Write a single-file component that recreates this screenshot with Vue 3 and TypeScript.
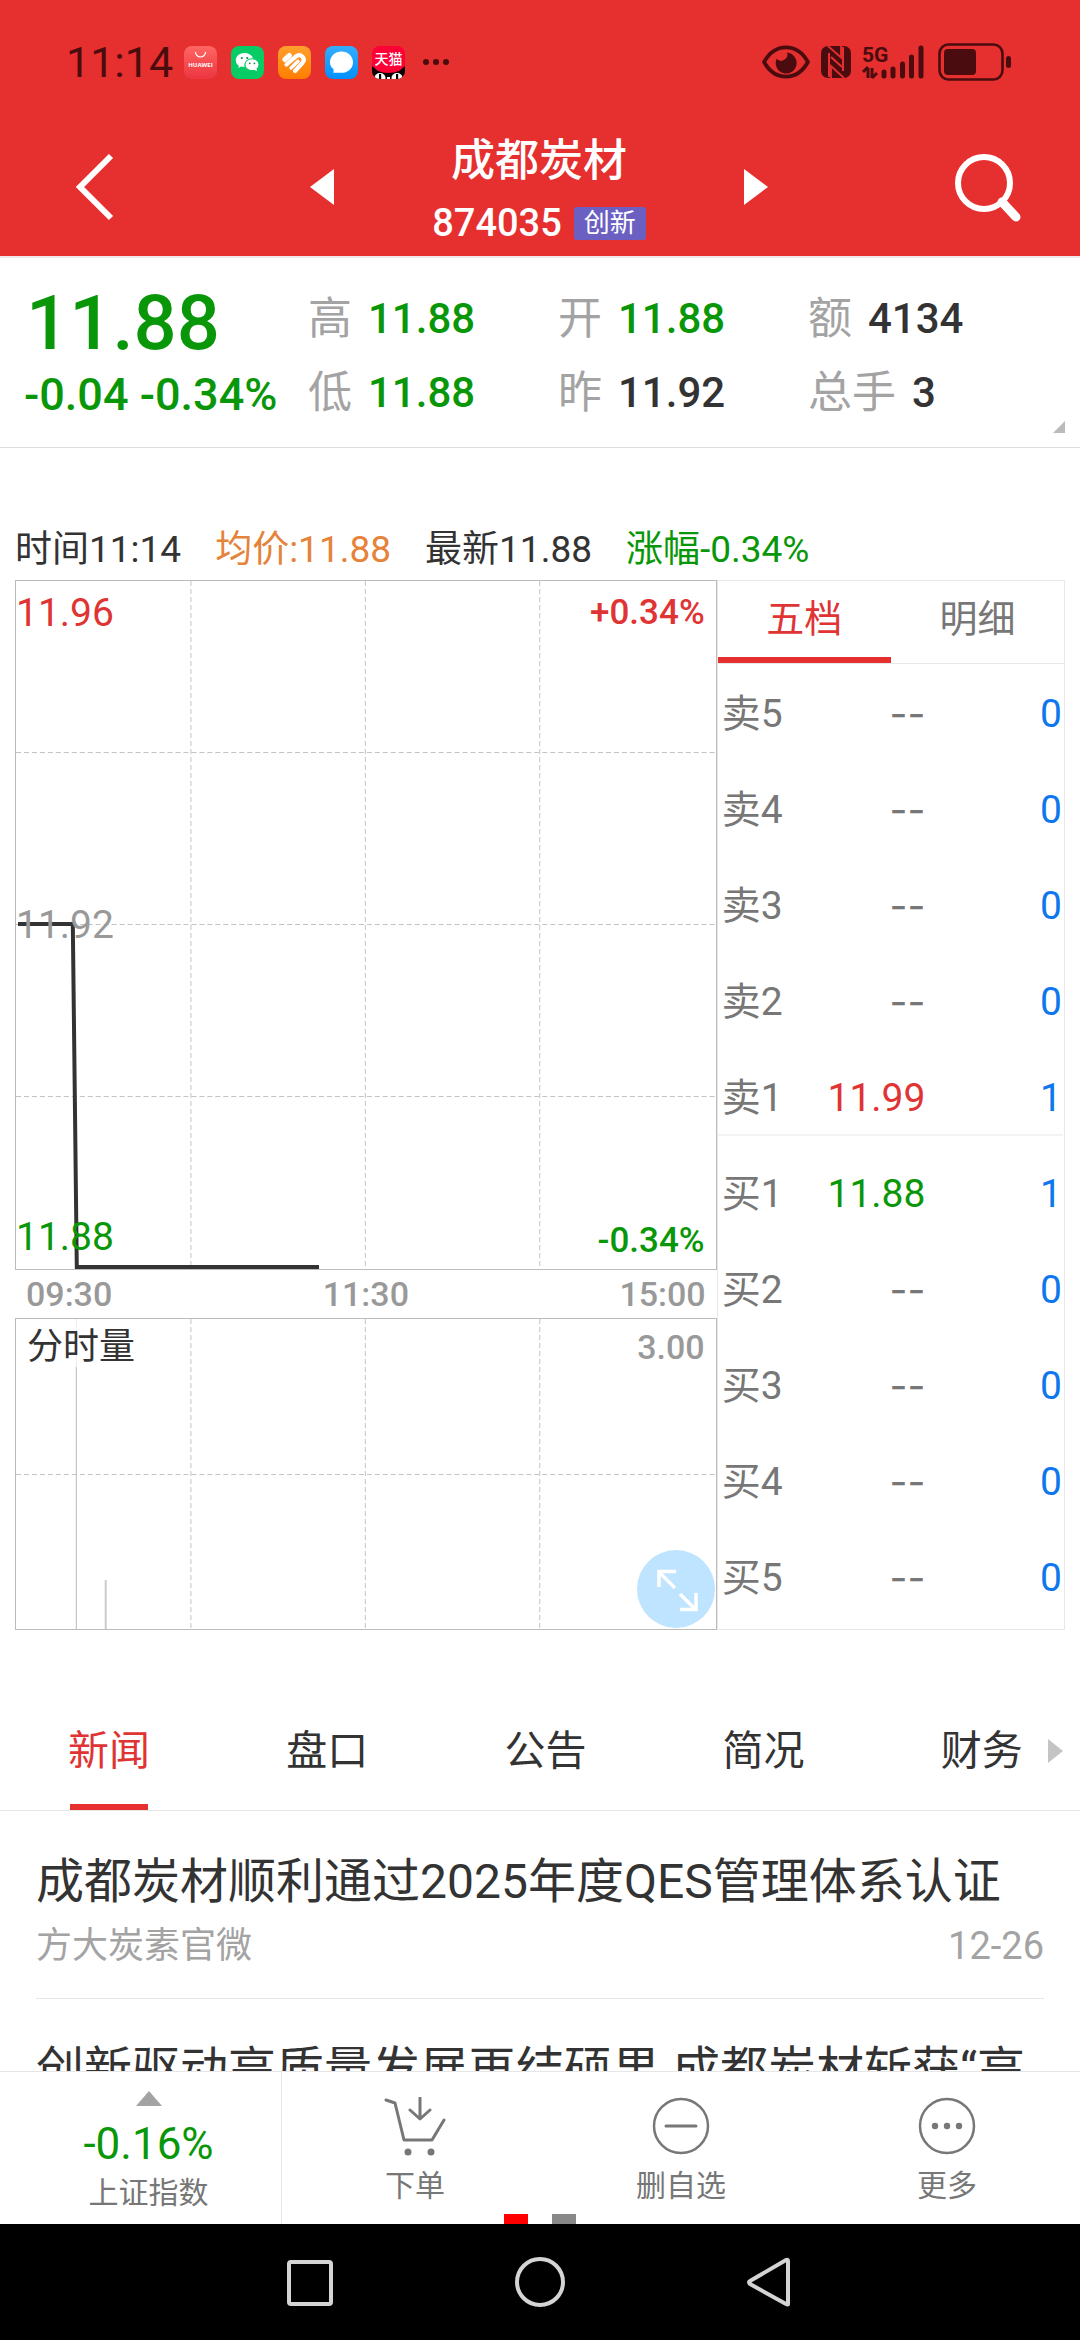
<script setup lang="ts">
import { ref } from 'vue'

type Tone = 'up' | 'down' | 'flat'
interface Stat { label: string; value: string; tone: Tone }
interface Level { label: string; price: string; volume: string; tone: Tone }
interface NewsItem { title: string; source?: string; date?: string }

const stats: Stat[] = [
  { label: '高', value: '11.88', tone: 'down' },
  { label: '开', value: '11.88', tone: 'down' },
  { label: '额', value: '4134', tone: 'flat' },
  { label: '低', value: '11.88', tone: 'down' },
  { label: '昨', value: '11.92', tone: 'flat' },
  { label: '总手', value: '3', tone: 'flat' },
]

const asks: Level[] = [
  { label: '卖5', price: '--', volume: '0', tone: 'flat' },
  { label: '卖4', price: '--', volume: '0', tone: 'flat' },
  { label: '卖3', price: '--', volume: '0', tone: 'flat' },
  { label: '卖2', price: '--', volume: '0', tone: 'flat' },
  { label: '卖1', price: '11.99', volume: '1', tone: 'up' },
]

const bids: Level[] = [
  { label: '买1', price: '11.88', volume: '1', tone: 'down' },
  { label: '买2', price: '--', volume: '0', tone: 'flat' },
  { label: '买3', price: '--', volume: '0', tone: 'flat' },
  { label: '买4', price: '--', volume: '0', tone: 'flat' },
  { label: '买5', price: '--', volume: '0', tone: 'flat' },
]

const bookTabs = ['五档', '明细']
const bookTab = ref(0)
const newsTabs = ['新闻', '盘口', '公告', '简况', '财务']
const newsTab = ref(0)

const news: NewsItem[] = [
  { title: '成都炭材顺利通过2025年度QES管理体系认证', source: '方大炭素官微', date: '12-26' },
  { title: '创新驱动高质量发展再结硕果 成都炭材斩获“高' },
]
</script>

<template>
  <div class="app">
    <header class="header">
      <div class="status">
        <span class="clock">11:14</span>
        <div class="notices">
          <svg viewBox="0 0 33 33" class="notice">
            <defs>
              <linearGradient id="gHw" x1="0" y1="0" x2="0" y2="1"><stop offset="0" stop-color="#ff6663" /><stop offset="1" stop-color="#ec3540" /></linearGradient>
              <linearGradient id="gHl" x1="0" y1="0" x2="0" y2="1"><stop offset="0" stop-color="#ff9f2e" /><stop offset="1" stop-color="#ff7d00" /></linearGradient>
              <linearGradient id="gMs" x1="0" y1="0" x2="0" y2="1"><stop offset="0" stop-color="#35adff" /><stop offset="1" stop-color="#0090ff" /></linearGradient>
            </defs>
            <rect width="33" height="33" rx="8" fill="url(#gHw)" />
            <path d="M11.500 6a5 5 0 0 0 10 0" fill="none" stroke="#fff" stroke-width="1.200" />
            <text x="16.500" y="21" text-anchor="middle" class="brand-text">HUAWEI</text>
          </svg>
          <svg viewBox="0 0 33 33" class="notice">
            <rect width="33" height="33" rx="8" fill="#07cc65" />
            <path d="M13.500 7C8.500 7 4.800 10.200 4.800 14.200c0 2.300 1.200 4.200 3.100 5.500L7.200 22l2.900-1.400c1 .3 2.200.5 3.500.5a7 7 0 0 1 8.600-8.200C21.400 9.500 18 7 13.500 7z" fill="#fff" />
            <ellipse cx="21" cy="18.700" rx="7" ry="5.900" fill="#fff" stroke="#07cc65" stroke-width="1" />
            <path d="M23 23.500l3 1.800-.6-3z" fill="#fff" />
            <g fill="#078a47"><circle cx="10.800" cy="12" r="1.100" /><circle cx="16.300" cy="12" r="1.100" /><circle cx="18.700" cy="17.300" r=".9" /><circle cx="23.400" cy="17.300" r=".9" /></g>
          </svg>
          <svg viewBox="0 0 33 33" class="notice">
            <rect width="33" height="33" rx="8" fill="url(#gHl)" />
            <g fill="none" stroke="#fff" stroke-linecap="round" stroke-linejoin="round">
              <path d="M6.800 13.500L11.500 9.500" stroke-width="5" />
              <path d="M8.500 18.500L18 10.300q3.500-2.300 6.300 0.200q3 3 0 6.500L17 25" stroke-width="4.200" />
              <path d="M13 22l7-6.800" stroke-width="3.300" />
            </g>
          </svg>
          <svg viewBox="0 0 33 33" class="notice">
            <rect width="33" height="33" rx="8" fill="url(#gMs)" />
            <path d="M16.500 5.500c6.300 0 11.500 4.700 11.500 10.700s-5 10.600-11.300 10.600H8.500V23C6 21.300 5 19 5 16.200 5 10.200 10.200 5.500 16.500 5.500z" fill="#fff" />
          </svg>
          <svg viewBox="0 0 33 33" class="notice">
            <defs><clipPath id="cTm"><rect width="33" height="33" rx="8" /></clipPath></defs>
            <g clip-path="url(#cTm)">
              <rect width="33" height="33" fill="#ff0036" />
              <path d="M0 20l6 5q5 2 10.500 2T27 25l6-5v13H0z" fill="#090304" />
              <ellipse cx="8" cy="32" rx="5.500" ry="5" fill="#fff" /><ellipse cx="25" cy="32" rx="5.500" ry="5" fill="#fff" />
              <rect x="7" y="28" width="2.200" height="5" fill="#000" /><rect x="24" y="28" width="2.200" height="5" fill="#000" />
              <rect x="15" y="31" width="3" height="2" fill="#fff" />
            </g>
            <text x="16.500" y="17.500" text-anchor="middle" class="tm-text">天猫</text>
          </svg>
        </div>
        <svg viewBox="0 0 28 8" class="dots"><circle cx="4" cy="4" r="3" /><circle cx="14" cy="4" r="3" /><circle cx="24" cy="4" r="3" /></svg>
        <div class="signals">
          <svg viewBox="0 0 46 32" class="eye">
            <path d="M2 16C7 7 14 2 23 2s16 5 21 14c-5 9-12 14-21 14S7 25 2 16z" fill="none" stroke="#4a0c0e" stroke-width="3.600" />
            <path d="M14 13a10 10 0 1 0 10-6 6 6 0 0 1-10 6z" fill="#4a0c0e" />
          </svg>
          <svg viewBox="0 0 32 34" class="nfc">
            <rect x="1" y="1" width="30" height="32" rx="7" fill="#4a0c0e" />
            <path d="M8 1L21 12.500V1M11 33V21L24 33" fill="none" stroke="#e62f2f" stroke-width="1.800" />
            <path d="M9 8v24M23 2v24M11 12l11 10" stroke="#e62f2f" stroke-width="2" />
          </svg>
          <svg viewBox="0 0 64 36" class="cell">
            <text x="0" y="18" class="net-text">5G</text>
            <path d="M6 24v10M1 28l5-5M10 24v10M15 29l-5 5" fill="none" stroke="#4a0c0e" stroke-width="3" />
            <g stroke="#4a0c0e" stroke-width="5" stroke-linecap="round"><path d="M22 28v4M31 25v7M40.500 20v12M49.500 13v19M59 4v28" /></g>
          </svg>
          <svg viewBox="0 0 74 38" class="battery">
            <rect x="1.500" y="1.500" width="63" height="35" rx="9" fill="none" stroke="#4a0c0e" stroke-width="2.600" />
            <rect x="6" y="6" width="32" height="26" rx="4" fill="#4a0c0e" />
            <rect x="68" y="13" width="5" height="12" rx="2.500" fill="#4a0c0e" />
          </svg>
        </div>
      </div>
      <div class="titlebar">
        <button class="icon-btn" aria-label="返回">
          <svg viewBox="0 0 40 68" class="chevron"><path d="M36 3L5 34l31 31" fill="none" stroke="#fff" stroke-width="6" /></svg>
        </button>
        <div class="switcher">
          <button class="icon-btn" aria-label="上一只"><svg viewBox="0 0 24 36" class="tri"><path d="M24 0v36L0 18z" fill="#fff" /></svg></button>
          <div class="names">
            <h1 class="name">成都炭材</h1>
            <div class="code-row"><span class="code">874035</span><span class="badge">创新</span></div>
          </div>
          <button class="icon-btn" aria-label="下一只"><svg viewBox="0 0 24 36" class="tri"><path d="M0 0v36l24-18z" fill="#fff" /></svg></button>
        </div>
        <button class="icon-btn" aria-label="搜索">
          <svg viewBox="0 0 68 70" class="search"><circle cx="29" cy="31" r="26" fill="none" stroke="#fff" stroke-width="6" /><path d="M47 50l14 15" stroke="#fff" stroke-width="9" stroke-linecap="round" /></svg>
        </button>
      </div>
    </header>

    <section class="quote">
      <div class="last">
        <strong class="price">11.88</strong>
        <span class="change">-0.04 -0.34%</span>
      </div>
      <dl class="stats">
        <div v-for="s in stats" :key="s.label" class="stat">
          <dt>{{ s.label }}</dt><dd :class="s.tone">{{ s.value }}</dd>
        </div>
      </dl>
      <i class="corner"></i>
    </section>

    <div class="legend">
      <span>时间11:14</span><span class="avg">均价:11.88</span><span>最新11.88</span><span class="down">涨幅-0.34%</span>
    </div>

    <section class="market">
      <div class="charts">
        <div class="chart trend">
          <svg viewBox="0 0 702 688" preserveAspectRatio="none" class="plot">
            <g stroke="#c4c4c4" stroke-width="1" stroke-dasharray="5 3" fill="none">
              <path d="M0 171.500H702M0 343.500H702M0 515.500H702M175.500 0V688M350.500 0V688M525.500 0V688" />
            </g>
            <path d="M2 343H57L61 686H304" fill="none" stroke="#333" stroke-width="4" />
          </svg>
          <span class="tick top up">11.96</span>
          <span class="tick mid">11.92</span>
          <span class="tick bottom down">11.88</span>
          <b class="pct top up">+0.34%</b>
          <b class="pct bottom down">-0.34%</b>
        </div>
        <div class="axis"><span>09:30</span><span>11:30</span><span>15:00</span></div>
        <div class="chart volume">
          <svg viewBox="0 0 702 310" preserveAspectRatio="none" class="plot">
            <g stroke="#c4c4c4" stroke-width="1" stroke-dasharray="5 3" fill="none">
              <path d="M0 155.500H702M175.500 0V310M350.500 0V310M525.500 0V310" />
            </g>
            <path d="M60.500 0V48" stroke="#ececec" /><path d="M60.500 48V310" stroke="#bbb" />
            <path d="M90 261V310" stroke="#ccc" stroke-width="2" />
          </svg>
          <div class="vol-head"><span>分时量</span><b class="vol-max">3.00</b></div>
          <button class="expand" aria-label="全屏">
            <svg viewBox="0 0 78 78"><path d="M38 38L22 22M22 37V21.500H39M43 44l16 16M59 43v16.500H43" fill="none" stroke="#fff" stroke-width="3.500" /></svg>
          </button>
        </div>
      </div>

      <div class="book">
        <div class="book-tabs">
          <button v-for="(t, i) in bookTabs" :key="t" :class="['book-tab', { active: bookTab === i }]" @click="bookTab = i">{{ t }}</button>
        </div>
        <table class="levels">
          <tbody class="asks">
            <tr v-for="l in asks" :key="l.label">
              <th scope="row">{{ l.label }}</th><td :class="['cost', l.tone, { none: l.price === '--' }]">{{ l.price }}</td><td class="lots">{{ l.volume }}</td>
            </tr>
          </tbody>
          <tbody>
            <tr v-for="l in bids" :key="l.label">
              <th scope="row">{{ l.label }}</th><td :class="['cost', l.tone, { none: l.price === '--' }]">{{ l.price }}</td><td class="lots">{{ l.volume }}</td>
            </tr>
          </tbody>
        </table>
      </div>
    </section>

    <nav class="tabs">
      <button v-for="(t, i) in newsTabs" :key="t" class="tab" @click="newsTab = i"><span :class="['tab-text', { active: newsTab === i }]">{{ t }}</span></button>
      <i class="more-arrow"></i>
    </nav>

    <main class="news">
      <article v-for="n in news" :key="n.title" class="item">
        <h2>{{ n.title }}</h2>
        <div v-if="n.source" class="meta"><span>{{ n.source }}</span><time>{{ n.date }}</time></div>
      </article>
    </main>

    <footer class="actions">
      <button class="index">
        <i class="up-arrow"></i>
        <span class="index-pct down">-0.16%</span>
        <span class="caption">上证指数</span>
      </button>
      <button class="action">
        <svg viewBox="0 0 62 60" class="glyph">
          <path d="M2 3l9 3 9 37h28l12-20" stroke-width="3" /><path d="M36 1v20M26 13l10 9 10-9" stroke-width="3" />
          <g fill="#777" stroke="none"><circle cx="24" cy="55" r="3.500" /><circle cx="47" cy="55" r="3.500" /></g>
        </svg>
        <span class="caption">下单</span>
      </button>
      <button class="action">
        <svg viewBox="0 0 62 60" class="glyph"><circle cx="31" cy="29" r="27" stroke-width="2.500" /><path d="M16 29h30" stroke-width="3" /></svg>
        <span class="caption">删自选</span>
      </button>
      <button class="action">
        <svg viewBox="0 0 62 60" class="glyph"><circle cx="31" cy="29" r="27" stroke-width="2.500" /><g fill="#777" stroke="none"><circle cx="19" cy="29" r="3.200" /><circle cx="31" cy="29" r="3.200" /><circle cx="43" cy="29" r="3.200" /></g></svg>
        <span class="caption">更多</span>
      </button>
      <div class="pager"><i class="on"></i><i></i></div>
    </footer>

    <nav class="sysnav">
      <button aria-label="最近任务"><svg viewBox="0 0 50 50"><rect x="4" y="5" width="42" height="42" rx="2" /></svg></button>
      <button aria-label="主页"><svg viewBox="0 0 50 50"><circle cx="25" cy="25" r="23" /></svg></button>
      <button aria-label="后退"><svg viewBox="0 0 50 50"><path d="M43 4v43q0 1-2 0L5 27q-2-2 0-3L41 3q2-1 2 1z" /></svg></button>
    </nav>
  </div>
</template>

<style>
body { margin: 0; background: #fff; }
</style>

<style scoped>
* { box-sizing: border-box; }
.app { display: flex; flex-direction: column; height: 100vh; background: #fff; color: #333; font-family: Roboto, "Noto Sans CJK SC", sans-serif; overflow: hidden; }
button { margin: 0; padding: 0; border: 0; background: none; font: inherit; color: inherit; cursor: pointer; }
svg { display: block; }
h1, h2, dl, dd { margin: 0; font-weight: 400; }
.up { color: #e03434; }
.down { color: #099709; }
.flat { color: #333; }

.header { flex: none; background: #e62f2f; border-bottom: 2px solid #f1e9e9; }
.status { display: flex; align-items: center; height: 124px; padding: 0 68px 0 66px; color: #4a0c0e; }
.clock { width: 118px; font-size: 43px; line-height: 52px; }
.notices { display: flex; gap: 14px; }
.notice { width: 33px; height: 33px; }
.brand-text { fill: #fff; font: 700 6px "Open Sans", sans-serif; }
.tm-text { fill: #fff; font: 500 14px "Noto Sans CJK SC", sans-serif; }
.dots { width: 28px; height: 8px; margin-left: 17px; fill: #4a0c0e; }
.signals { display: flex; align-items: center; gap: 10px; margin-left: auto; }
.eye { width: 48px; height: 34px; }
.nfc { width: 32px; height: 34px; }
.cell { width: 64px; height: 36px; }
.net-text { fill: #4a0c0e; font: 700 21px Roboto, sans-serif; }
.battery { width: 74px; height: 38px; margin-left: 2px; }

.titlebar { display: flex; align-items: center; justify-content: space-between; height: 132px; padding: 0 57px 6px 75px; }
.icon-btn { display: flex; align-items: center; }
.chevron { width: 40px; height: 68px; }
.search { width: 68px; height: 70px; }
.switcher { display: flex; align-items: center; justify-content: space-between; width: 458px; margin-left: 8px; }
.tri { width: 24px; height: 36px; }
.names { display: flex; flex-direction: column; align-items: center; padding-top: 10px; color: #fff; }
.name { font-size: 44px; line-height: 62px; font-weight: 500; }
.code-row { display: flex; align-items: center; gap: 12px; height: 62px; }
.code { font-size: 38px; line-height: 48px; font-weight: 500; }
.badge { padding: 0 10px; border-radius: 3px; background: #6b60c2; font-size: 26px; line-height: 33px; }

.quote { position: relative; display: flex; flex: none; height: 190px; padding-top: 24px; border-bottom: 1px solid #ddd; }
.last { width: 308px; padding-left: 24px; color: #099709; }
.price { display: block; padding-left: 2px; font-size: 76px; line-height: 82px; font-weight: 500; }
.change { display: block; font-size: 45px; line-height: 62px; font-weight: 500; white-space: nowrap; }
.stats { display: grid; flex: 1; grid-template-columns: 250fr 250fr 272fr; grid-auto-rows: 74px; }
.stat { display: flex; align-items: center; gap: 16px; font-size: 44px; line-height: 60px; }
.stat dt { color: #a3a3a3; }
.stat dd { font-size: 42px; font-weight: 500; }
.corner { position: absolute; right: 15px; bottom: 14px; border-left: 12px solid transparent; border-bottom: 12px solid #bbb; }

.legend { display: flex; flex: none; gap: 34px; height: 132px; padding: 72px 15px 0; font-size: 37px; line-height: 60px; }
.avg { color: #e5833b; }

.market { display: flex; flex: none; height: 1050px; margin: 0 15px; }
.charts { display: flex; flex: 703; flex-direction: column; }
.chart { position: relative; border: 1px solid #bbb; }
.trend { height: 690px; }
.plot { position: absolute; inset: 0; width: 100%; height: 100%; }
.tick { position: absolute; left: 0; font-size: 39px; line-height: 60px; }
.tick.top, .pct.top { top: 2px; }
.tick.mid { top: 50%; color: #999; transform: translateY(-50%); }
.tick.bottom { bottom: 2px; }
.pct { position: absolute; right: 11px; font-size: 35px; line-height: 60px; font-weight: 500; }
.pct.bottom { bottom: -2px; }
.axis { display: flex; align-items: center; justify-content: space-between; height: 48px; padding: 0 11px; color: #999; font-size: 34px; line-height: 48px; font-weight: 500; }
.volume { flex: 1; }
.vol-head { position: relative; display: flex; justify-content: space-between; padding: 0 11px; font-size: 36px; line-height: 56px; }
.vol-max { color: #999; font-size: 34px; font-weight: 500; }
.expand { position: absolute; right: 1px; bottom: 1px; width: 78px; height: 78px; border-radius: 50%; background: #bfe4ff; }

.book { flex: 347; border: 1px solid #e8e8e8; }
.book-tabs { display: flex; height: 83px; border-bottom: 1px solid #e8e8e8; }
.book-tab { flex: 1; border-bottom: 6px solid transparent; color: #777; font-size: 38px; line-height: 70px; }
.book-tab.active { border-color: #e62f2f; color: #e03434; }
.levels { width: 100%; margin-top: 2px; border-collapse: collapse; table-layout: fixed; font-size: 39px; line-height: 60px; }
.levels tr { height: 96px; }
.levels th { width: 26%; padding: 0 0 0 4px; color: #777; font-weight: 400; text-align: left; }
.levels td { padding: 0; text-align: right; }
.levels .cost { width: 34%; }
.levels .none { color: #777; font-family: Inter, sans-serif; }
.levels .lots { padding-right: 2px; color: #0f77ee; }
.asks tr:last-child { background: linear-gradient(#f3f3f3, #f3f3f3) left 0 bottom 10px / 100% 2px no-repeat; }

.tabs { position: relative; display: flex; flex: none; height: 181px; border-bottom: 1px solid #e6e6e6; overflow: hidden; }
.tab { display: flex; flex: none; justify-content: center; align-items: flex-end; width: 20.2%; }
.tab-text { padding-bottom: 27px; font-size: 41px; line-height: 64px; }
.tab-text.active { background: linear-gradient(#e62f2f, #e62f2f) center bottom / 78px 6px no-repeat; color: #e03434; }
.more-arrow { position: absolute; right: 17px; top: 109px; border: solid transparent; border-width: 12px 0 12px 15px; border-left-color: #c4c4c4; }

.news { flex: 1; min-height: 0; overflow: hidden; padding: 0 36px; }
.item { height: 188px; padding-top: 36px; border-bottom: 1px solid #e6e6e6; }
.item h2 { font-size: 48px; line-height: 70px; white-space: nowrap; }
.meta { display: flex; justify-content: space-between; color: #a3a3a3; font-size: 36px; line-height: 58px; }
.meta time { font-size: 38px; }

.actions { position: relative; display: flex; flex: none; height: 153px; border-top: 1px solid #e6e6e6; background: #fff; color: #777; }
.index { display: flex; flex-direction: column; align-items: center; width: 282px; padding: 19px 0 0 16px; border-right: 1px solid #e6e6e6; }
.up-arrow { border: solid transparent; border-width: 0 13px 15px; border-bottom-color: #a3a3a3; }
.index-pct { margin-top: 10px; font-size: 44px; line-height: 56px; }
.caption { font-size: 30px; line-height: 42px; }
.action { display: flex; flex: 1; flex-direction: column; align-items: center; gap: 8px; padding-top: 25px; }
.glyph { width: 62px; height: 60px; fill: none; stroke: #777; stroke-linecap: round; stroke-linejoin: round; }
.pager { position: absolute; left: 0; right: 0; bottom: 0; display: flex; justify-content: center; gap: 24px; }
.pager i { width: 24px; height: 10px; background: #888; }
.pager .on { background: #f00; }

.sysnav { display: flex; flex: none; justify-content: center; align-items: center; gap: 180px; height: 116px; background: #000; }
.sysnav svg { width: 50px; height: 50px; fill: none; stroke: #d4d4d4; stroke-width: 4; }
</style>
